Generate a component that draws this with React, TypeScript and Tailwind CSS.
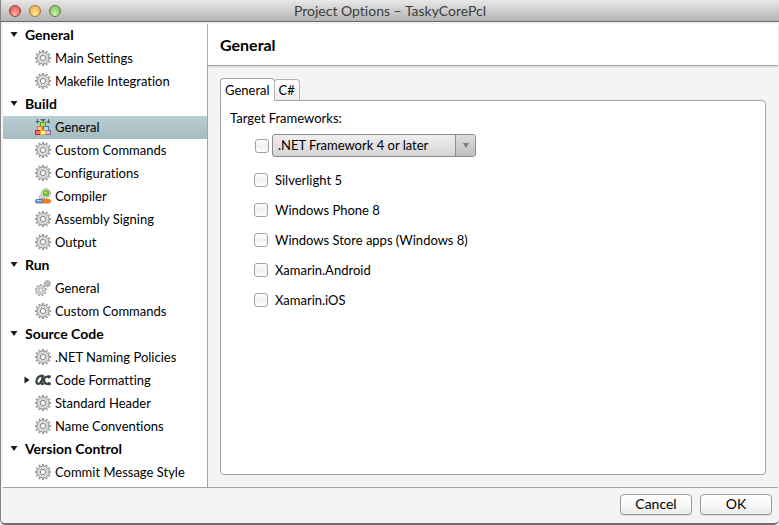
import { useState } from "react";

type IconName = "gear" | "bricks" | "compiler" | "gears" | "format";

type Item = { label: string; icon: IconName; expandable?: boolean };
type Section = { title: string; items: Item[] };

const sections: Section[] = [
  {
    title: "General",
    items: [
      { label: "Main Settings", icon: "gear" },
      { label: "Makefile Integration", icon: "gear" },
    ],
  },
  {
    title: "Build",
    items: [
      { label: "General", icon: "bricks" },
      { label: "Custom Commands", icon: "gear" },
      { label: "Configurations", icon: "gear" },
      { label: "Compiler", icon: "compiler" },
      { label: "Assembly Signing", icon: "gear" },
      { label: "Output", icon: "gear" },
    ],
  },
  {
    title: "Run",
    items: [
      { label: "General", icon: "gears" },
      { label: "Custom Commands", icon: "gear" },
    ],
  },
  {
    title: "Source Code",
    items: [
      { label: ".NET Naming Policies", icon: "gear" },
      { label: "Code Formatting", icon: "format", expandable: true },
      { label: "Standard Header", icon: "gear" },
      { label: "Name Conventions", icon: "gear" },
    ],
  },
  {
    title: "Version Control",
    items: [{ label: "Commit Message Style", icon: "gear" }],
  },
];

const frameworks = [
  "Silverlight 5",
  "Windows Phone 8",
  "Windows Store apps (Windows 8)",
  "Xamarin.Android",
  "Xamarin.iOS",
];

function gearPath(cx: number, cy: number, outer: number, inner: number, teeth: number) {
  const points: string[] = [];
  const step = (Math.PI * 2) / teeth;
  const at = (r: number, a: number) =>
    `${(cx + r * Math.cos(a)).toFixed(2)} ${(cy + r * Math.sin(a)).toFixed(2)}`;
  for (let i = 0; i < teeth; i++) {
    const a = i * step - Math.PI / 2;
    points.push(at(inner, a - step * 0.26), at(outer, a - step * 0.12));
    points.push(at(outer, a + step * 0.12), at(inner, a + step * 0.26));
  }
  return `M${points.join("L")}Z`;
}

const bigGear = gearPath(8, 8, 7.8, 5.7, 12);
const midGear = gearPath(5.8, 10.2, 5.7, 4.4, 9);
const tinyGear = gearPath(12.4, 3.6, 3.5, 2.7, 8);

function Icon({ name }: { name: IconName }) {
  return (
    <svg viewBox="0 0 16 16" className="size-4 shrink-0" aria-hidden="true">
      {name === "gear" && (
        <>
          <path d={bigGear} fill="#e0e0e0" stroke="#686868" strokeWidth="0.7" />
          <circle cx="8" cy="8" r="4.1" fill="none" stroke="#d8d8d8" strokeWidth="1.6" />
          <circle cx="8" cy="8" r="2.6" fill="#fff" stroke="#767676" strokeWidth="0.9" />
        </>
      )}
      {name === "gears" && (
        <>
          <path d={midGear} fill="#dfe0dd" stroke="#868884" strokeWidth="0.8" />
          <circle cx="5.8" cy="10.2" r="2.1" fill="#fff" stroke="#8b8d89" strokeWidth="0.8" />
          <path d={tinyGear} fill="#bfc1bd" stroke="#92948f" strokeWidth="0.6" />
          <circle cx="12.4" cy="3.6" r="1.2" fill="#e2e2df" stroke="#8b8d89" strokeWidth="0.6" />
        </>
      )}
      {name === "bricks" && (
        <>
          <path d="M2.5 0v3M13.5 0v3M5.5 .5h5" fill="none" stroke="#5a6466" />
          <path d="M.3 2h4.4L2.5 4.5zM11.3 2h4.4L13.5 4.5zM6 1h4L8 3z" fill="#5a6466" />
          <rect x="5.5" y="3.5" width="5" height="4" fill="#9bee55" stroke="#53a010" />
          <rect x="2.5" y="7.5" width="5" height="4" fill="#fdc389" stroke="#ea7b25" />
          <rect x="8.5" y="7.5" width="5" height="4" fill="#bcd6f4" stroke="#4478b8" />
          <rect x=".5" y="11.5" width="5" height="4" fill="#f47070" stroke="#cc2222" />
          <rect x="10.5" y="11.5" width="5" height="4" fill="#d9b9d7" stroke="#96609c" />
          <rect x="5.5" y="11.5" width="5" height="4" fill="#fdf08a" stroke="#dcaf10" />
        </>
      )}
      {name === "compiler" && (
        <>
          <path d="M4.6 10.6c-.4-2.4.6-4 2.6-4.4l2 4.4z" fill="#e6e7e4" stroke="#a4a6a2" strokeWidth=".9" />
          <circle cx="10.8" cy="5.4" r="4.7" fill="#eef0ec" stroke="#a4a6a2" strokeWidth=".9" />
          <circle cx="11" cy="5.2" r="3" fill="#73c832" stroke="#58a022" strokeWidth=".8" />
          <circle cx="10.6" cy="4.8" r="1.3" fill="#a4e66c" />
          <rect x=".5" y="11.4" width="8" height="3.6" rx="1.6" fill="#6d9fda" stroke="#2c5a9c" strokeWidth=".8" />
          <rect x="7.5" y="11.4" width="8" height="3.6" rx="1.6" fill="#f57e20" stroke="#d0600a" strokeWidth=".8" />
          <path d="M1.8 12.6h4.4" stroke="#c3dbf5" strokeWidth=".9" />
        </>
      )}
      {name === "format" && (
        <>
          <path
            d="M8.8 4C4.6 2.8 1.4 6 1.4 9.4c0 3.6 3.6 3.2 5-.2l2.2-5.2-2 5.4c-.7 2.6.5 3.2 2.2 2"
            fill="none"
            stroke="#3c4143"
            strokeWidth="2.3"
          />
          <path
            d="M15.8 4.6h-3c-2.6 0-3.8 1.7-3.8 3.6 0 2.4 1.6 3.6 3.8 3.6h3"
            fill="none"
            stroke="#3c4143"
            strokeWidth="2.3"
          />
          <path d="M13.8 3.4v3.2M13.8 10v3.2" stroke="#3c4143" strokeWidth="1.4" />
          <path d="M2.6 8.6c.6-1.6 1.6-2.6 3-2.9M9.6 7.6c.4-1.2 1.2-2 2.4-2.2" fill="none" stroke="#a4a8a9" strokeWidth=".7" />
        </>
      )}
    </svg>
  );
}

function Triangle({ open }: { open: boolean }) {
  return (
    <svg viewBox="0 0 8 8" className="size-2 shrink-0" aria-hidden="true">
      <path d={open ? "M.5 1h7L4 6z" : "M1.5 .5v7L6.5 4z"} fill="#1c1c1c" />
    </svg>
  );
}

const lights = [
  { label: "Close", tone: "border-[#96403f] bg-radial-[at_50%_85%] from-[#ffb3ae] to-[#dc4244]" },
  { label: "Minimize", tone: "border-[#a0713a] bg-radial-[at_50%_85%] from-[#ffeb9c] to-[#eba63f]" },
  { label: "Zoom", tone: "border-[#5b7f43] bg-radial-[at_50%_85%] from-[#d0f5a8] to-[#6fb553]" },
];

const checkbox =
  "size-[14px] shrink-0 appearance-none rounded-[3px] border border-[#a2a2a2] bg-linear-to-b from-white via-[#f1f1f1] to-white checked:bg-[#a9c0c4]";

const dialogButton =
  "h-[21px] w-[72px] rounded-[4px] border border-[#9b9b9b] bg-linear-to-b from-white via-[#f8f8f8] to-[#ececec] pb-px text-[14px] leading-none shadow-[0_1px_1px_#d4d4d4]";

export default function App() {
  const [selected, setSelected] = useState("Build/General");
  const [tab, setTab] = useState("General");

  return (
    <div className="flex h-screen flex-col overflow-hidden rounded-b-[5px] border-b-2 border-l border-b-[#707070] border-l-[#858585] bg-[#f4f4f4] font-['Lato','Open_Sans',sans-serif] text-[13px] leading-[18px] text-black [font-variant-ligatures:none]">
      <header className="relative flex h-[22px] shrink-0 items-center justify-center border-b border-[#686868] bg-linear-to-b from-[#e8e8e8] to-[#b4b4b4]">
        <div className="absolute left-2 flex gap-2">
          {lights.map((l) => (
            <button key={l.label} aria-label={l.label} className={`size-3 rounded-full border ${l.tone}`} />
          ))}
        </div>
        <h1 className="text-[14px] text-[#3c3c3c]">Project Options – TaskyCorePcl</h1>
      </header>

      <div className="flex min-h-0 flex-1 pt-[2px] pr-px pl-[2px]">
        <nav className="w-[205px] shrink-0 border-r border-[#a3a3a3] bg-white" aria-label="Options">
          {sections.map((s) => (
            <section key={s.title}>
              <h2 className="flex h-[23px] items-center gap-[7px] pb-px pl-[7px] text-[14px] font-bold">
                <Triangle open />
                {s.title}
              </h2>
              <ul>
                {s.items.map((item) => {
                  const id = `${s.title}/${item.label}`;
                  return (
                    <li key={id}>
                      <button
                        onClick={() => setSelected(id)}
                        className={`flex h-[23px] w-full items-center pb-px pl-5 text-left ${
                          id === selected ? "bg-linear-to-b from-[#b9cfd3] to-[#a4bbbf]" : ""
                        }`}
                      >
                        <span className="w-3">{item.expandable && <Triangle open={false} />}</span>
                        <Icon name={item.icon} />
                        <span className="pl-1">{item.label}</span>
                      </button>
                    </li>
                  );
                })}
              </ul>
            </section>
          ))}
        </nav>

        <main className="flex min-w-0 flex-1 flex-col">
          <div className="flex h-[42px] shrink-0 items-center border-b border-[#a3a3a3] bg-white px-3 shadow-[0_1px_2px_#d0d0d0]">
            <h2 className="text-[16px] font-bold">General</h2>
          </div>
          <div className="flex min-h-0 flex-1 flex-col px-3 pt-3 pb-3">
            <div role="tablist" className="z-10 -mb-px flex items-end">
              {["General", "C#"].map((t) => (
                <button
                  key={t}
                  role="tab"
                  aria-selected={t === tab}
                  onClick={() => setTab(t)}
                  className={`rounded-t-[4px] border px-1 ${
                    t === tab
                      ? "h-[23px] border-[#a3a3a3] border-b-white bg-white"
                      : "-ml-px h-[22px] border-[#b4b4b4] border-b-[#a3a3a3] bg-linear-to-b from-white to-[#ededed]"
                  }`}
                >
                  {t}
                </button>
              ))}
            </div>
            <div role="tabpanel" className="flex-1 rounded-b-[4px] rounded-tr-[4px] border border-[#a3a3a3] bg-white px-[9px] pt-2">
              <p>Target Frameworks:</p>
              <div className="mt-[7px] flex items-center gap-[3px] pl-[25px]">
                <input type="checkbox" aria-label=".NET Framework" className={checkbox} />
                <div className="relative w-[204px]">
                  <select
                    aria-label="Framework version"
                    className="h-[23px] w-full appearance-none rounded-[3px] border border-[#8c8c8c] bg-linear-to-b from-[#f0f0f0] to-[#d4d4d4] pl-[5px] leading-none"
                  >
                    <option>.NET Framework 4 or later</option>
                  </select>
                  <span className="pointer-events-none absolute inset-y-px right-px flex w-5 items-center justify-center rounded-r-[2px] border-l border-[#8c8c8c] bg-linear-to-b from-[#dedede] to-[#bebebe]">
                    <svg viewBox="0 0 6 5" className="h-[5px] w-[6px]" aria-hidden="true">
                      <path d="M0 0h6L3 5z" fill="#7c7c7c" />
                    </svg>
                  </span>
                </div>
              </div>
              <ul className="mt-[14px] flex flex-col gap-3 pl-6">
                {frameworks.map((f) => (
                  <li key={f}>
                    <label className="flex w-fit items-center gap-[7px]">
                      <input type="checkbox" className={checkbox} />
                      {f}
                    </label>
                  </li>
                ))}
              </ul>
            </div>
          </div>
        </main>
      </div>

      <footer className="mr-px ml-[2px] flex h-9 shrink-0 justify-end gap-2 border-t border-[#a3a3a3] pt-[6px] pr-[6px]">
        <button className={dialogButton}>Cancel</button>
        <button className={dialogButton}>OK</button>
      </footer>
    </div>
  );
}
